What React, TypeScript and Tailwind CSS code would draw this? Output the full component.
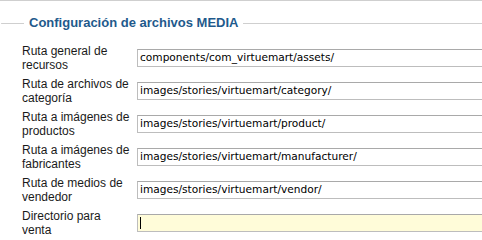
const fields = [
  { label: "Ruta general de recursos", value: "components/com_virtuemart/assets/" },
  { label: "Ruta de archivos de categoría", value: "images/stories/virtuemart/category/" },
  { label: "Ruta a imágenes de productos", value: "images/stories/virtuemart/product/" },
  { label: "Ruta a imágenes de fabricantes", value: "images/stories/virtuemart/manufacturer/" },
  { label: "Ruta de medios de vendedor", value: "images/stories/virtuemart/vendor/" },
  { label: "Directorio para venta", value: "", focused: true },
];

export default function App() {
  return (
    <div className="h-[240px] w-[482px] overflow-hidden border-t border-[#cfcfcf] bg-white font-['Liberation_Sans',Arial,sans-serif] text-[12px] text-[#1a1a1a]">
      {/* fieldset legend */}
      <div className="mt-[14px] flex h-4 items-center">
        <div className="ml-[1px] h-px w-[23px] rounded-l-full bg-[#cfcfcf]" />
        <span className="px-[5px] text-[13px] leading-4 font-bold text-[#1f5a8c]">
          Configuración de archivos MEDIA
        </span>
        <div className="h-px flex-1 bg-[#cfcfcf]" />
      </div>

      <div className="mt-[10px]">
        {fields.map((f) => (
          <div key={f.label} className="flex h-[33px] items-center">
            <div className="w-[137px] shrink-0 pl-[22px] pr-[6px] leading-[14px]">{f.label}</div>
            <div
              className={`flex h-[18px] w-[360px] shrink-0 items-center border border-[#bdbdbd] border-t-[#a9a9a9] pl-[2px] font-['DejaVu_Sans',sans-serif] text-[10.6px] text-black ${
                f.focused ? "bg-[#fffcd9]" : "bg-white"
              }`}
            >
              {f.focused ? <span className="h-[12px] w-px bg-black" /> : f.value}
            </div>
          </div>
        ))}
      </div>
    </div>
  );
}
